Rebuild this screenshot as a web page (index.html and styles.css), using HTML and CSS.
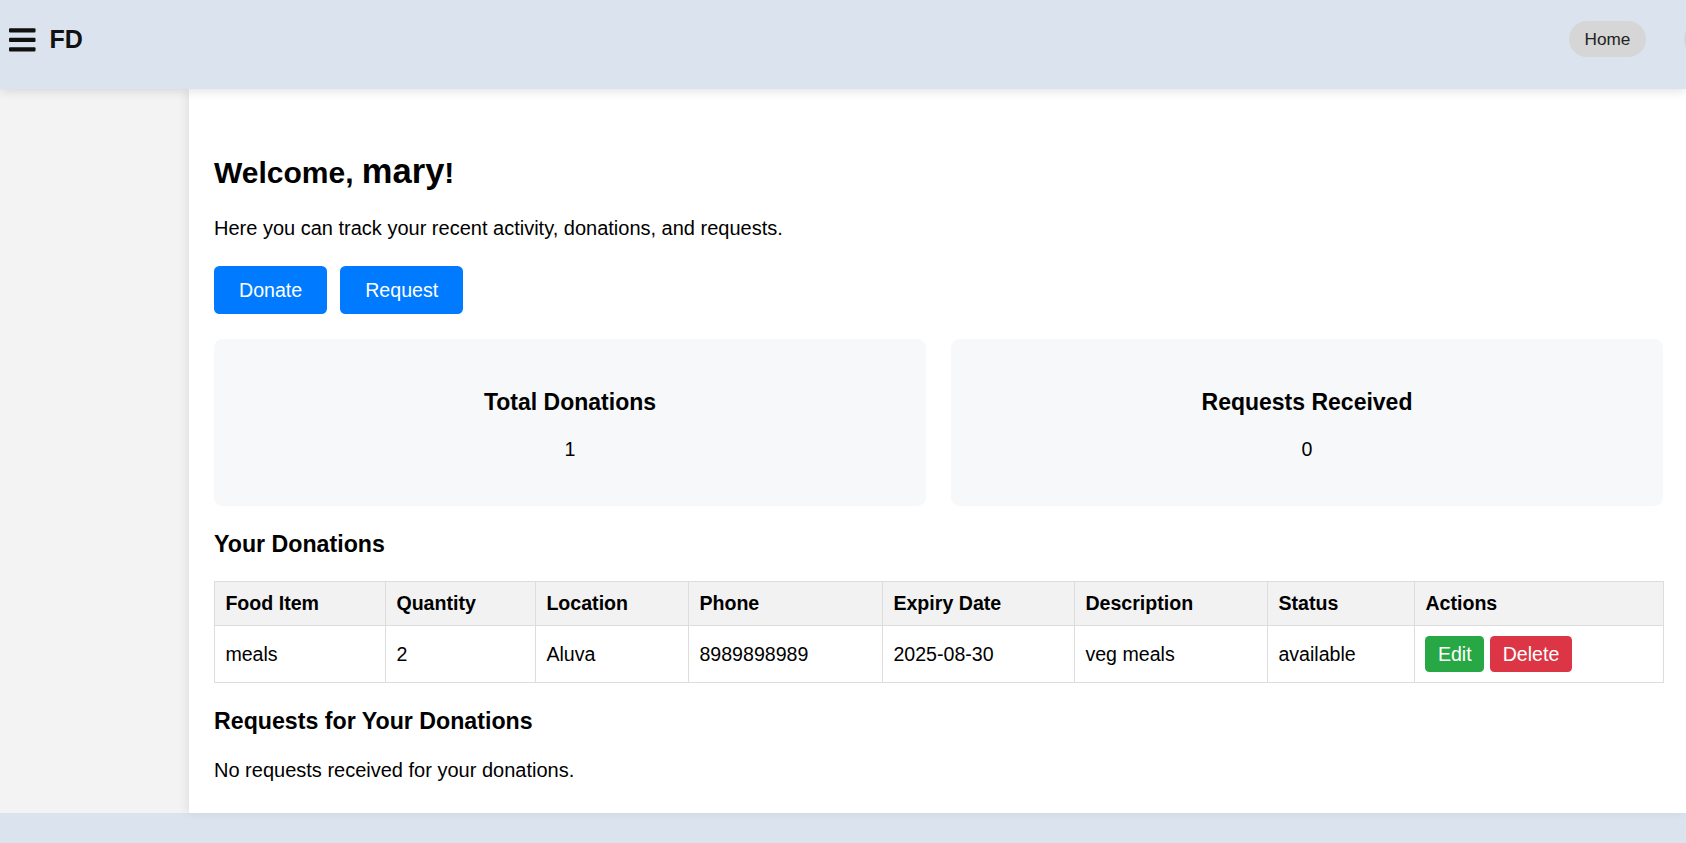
FILE: index.html
```html
<!DOCTYPE html>
<html lang="en">
<head>
<meta charset="utf-8">
<title>FD - Dashboard</title>
<link rel="stylesheet" href="styles.css">
</head>
<body>
<header class="topbar">
  <div class="brand">
    <svg class="burger" width="27" height="24" viewBox="0 0 27 24" aria-hidden="true">
      <rect x="0" y="0.3" width="26.5" height="4.2" rx="1" fill="#111"/>
      <rect x="0" y="9.7" width="26.5" height="4.2" rx="1" fill="#111"/>
      <rect x="0" y="19.3" width="26.5" height="4.2" rx="1" fill="#111"/>
    </svg>
    <span class="logo">FD</span>
  </div>
  <nav class="nav">
    <a class="pill" href="#">Home</a>
    <a class="pill" href="#">Dashboard</a>
  </nav>
</header>
<div class="layout">
  <aside class="sidebar"></aside>
  <main class="content">
    <h2 class="welcome">Welcome, <strong class="user">mary</strong>!</h2>
    <p class="intro">Here you can track your recent activity, donations, and requests.</p>
    <div class="actions">
      <a class="btn btn-primary" href="#">Donate</a>
      <a class="btn btn-primary" href="#">Request</a>
    </div>
    <div class="stats">
      <div class="stat-card">
        <h3 class="stat-title">Total Donations</h3>
        <p class="stat-value">1</p>
      </div>
      <div class="stat-card">
        <h3 class="stat-title">Requests Received</h3>
        <p class="stat-value">0</p>
      </div>
    </div>
    <h3 class="section-title">Your Donations</h3>
    <table class="data-table">
      <colgroup>
        <col class="c-food"><col class="c-qty"><col class="c-loc"><col class="c-phone">
        <col class="c-exp"><col class="c-desc"><col class="c-status"><col class="c-act">
      </colgroup>
      <thead>
        <tr>
          <th>Food Item</th><th>Quantity</th><th>Location</th><th>Phone</th>
          <th>Expiry Date</th><th>Description</th><th>Status</th><th>Actions</th>
        </tr>
      </thead>
      <tbody>
        <tr>
          <td>meals</td><td>2</td><td>Aluva</td><td>8989898989</td>
          <td>2025-08-30</td><td>veg meals</td><td>available</td>
          <td><div class="row-actions"><a class="sbtn sbtn-edit" href="#">Edit</a><a class="sbtn sbtn-delete" href="#">Delete</a></div></td>
        </tr>
      </tbody>
    </table>
    <h3 class="section-title section-title-2">Requests for Your Donations</h3>
    <p class="empty">No requests received for your donations.</p>
  </main>
</div>
<footer class="footer"></footer>
</body>
</html>
```

FILE: styles.css
```css
* { box-sizing: border-box; }

html, body {
  margin: 0;
  padding: 0;
}

body {
  height: 100vh;
  overflow: hidden;
  display: flex;
  flex-direction: column;
  font-family: "Liberation Sans", Arial, sans-serif;
  color: #000;
  background: #fff;
}

a { text-decoration: none; }

/* Top bar */
.topbar {
  flex: 0 0 89px;
  height: 89px;
  display: flex;
  align-items: flex-start;
  padding: 21px 0 0 9px;
  background: #dbe4ee;
  box-shadow: 0 2px 10px rgba(0, 0, 0, 0.12);
  position: relative;
  z-index: 3;
}

.brand {
  flex: 1;
  height: 36px;
  display: flex;
  align-items: center;
}

.burger {
  display: block;
  margin-top: 1px;
}

.logo {
  margin-left: 13.5px;
  font-size: 25px;
  font-weight: 700;
  line-height: 28px;
  color: #111;
}

.nav {
  flex: none;
  width: 117px;
  display: flex;
  gap: 38px;
  white-space: nowrap;
}

.pill {
  flex: none;
  height: 36px;
  padding: 0 15.5px;
  border-radius: 18px;
  background: #d6d6d6;
  color: #222;
  font-size: 17.2px;
  line-height: 36px;
}

/* Layout */
.layout {
  flex: 1;
  display: flex;
  min-height: 0;
}

.sidebar {
  flex: 0 0 189px;
  background: #f3f3f3;
}

.content {
  flex: 1;
  min-width: 0;
  background: #fff;
  padding: 67px 23px 0 25px;
  position: relative;
  z-index: 1;
  box-shadow: -3px 0 9px rgba(0, 0, 0, 0.07);
}

.welcome {
  margin: 0;
  font-size: 30px;
  line-height: 34px;
  font-weight: 700;
}

.user {
  font-weight: 900;
  font-size: 34.5px;
  line-height: 30px;
}

.intro {
  margin: 26.5px 0 0;
  font-size: 20px;
  line-height: 23px;
}

.actions {
  margin-top: 26.5px;
  display: flex;
  gap: 13px;
}

.btn {
  display: block;
  height: 48px;
  padding: 13px 25px;
  border-radius: 5.5px;
  font-size: 19.6px;
  line-height: 22px;
  color: #fff;
}

.btn-primary { background: #007bff; }

/* Stats */
.stats {
  margin-top: 25px;
  display: grid;
  grid-template-columns: 1fr 1fr;
  gap: 25px;
}

.stat-card {
  background: #f7f8fa;
  border-radius: 8.5px;
  padding: 50px 20px 46px;
  text-align: center;
}

.stat-title {
  margin: 0;
  font-size: 23px;
  line-height: 26.5px;
  font-weight: 700;
}

.stat-value {
  margin: 22px 0 0;
  font-size: 19.6px;
  line-height: 22.5px;
}

/* Sections */
.section-title {
  margin: 25px 0 0;
  font-size: 23.2px;
  line-height: 26.5px;
  font-weight: 700;
}

.section-title-2 { margin-top: 25px; }

/* Table */
.data-table {
  margin-top: 23.5px;
  width: 100%;
  table-layout: fixed;
  border-collapse: collapse;
  border: 1px solid #ddd;
  font-size: 19.6px;
  line-height: 22.5px;
}

.c-food { width: 171px; }
.c-qty { width: 150px; }
.c-loc { width: 153px; }
.c-phone { width: 194px; }
.c-exp { width: 192px; }
.c-desc { width: 193px; }
.c-status { width: 147px; }
.c-act { width: 249px; }

.data-table th,
.data-table td {
  border: 1px solid #ddd;
  padding: 10px 10.4px;
  text-align: left;
  vertical-align: middle;
}

.data-table th {
  background: #f2f2f2;
  font-weight: 700;
}

.row-actions {
  display: flex;
  gap: 6px;
}

.sbtn {
  display: block;
  padding: 7px 12.5px;
  border-radius: 4.3px;
  font-size: 19.6px;
  line-height: 22.5px;
  color: #fff;
}

.sbtn-edit { background: #28a745; }
.sbtn-delete { background: #dc3545; }

.empty {
  margin: 24px 0 0;
  font-size: 20px;
  line-height: 22.5px;
}

/* Footer */
.footer {
  flex: 0 0 30px;
  background: #dbe4ee;
}
```
